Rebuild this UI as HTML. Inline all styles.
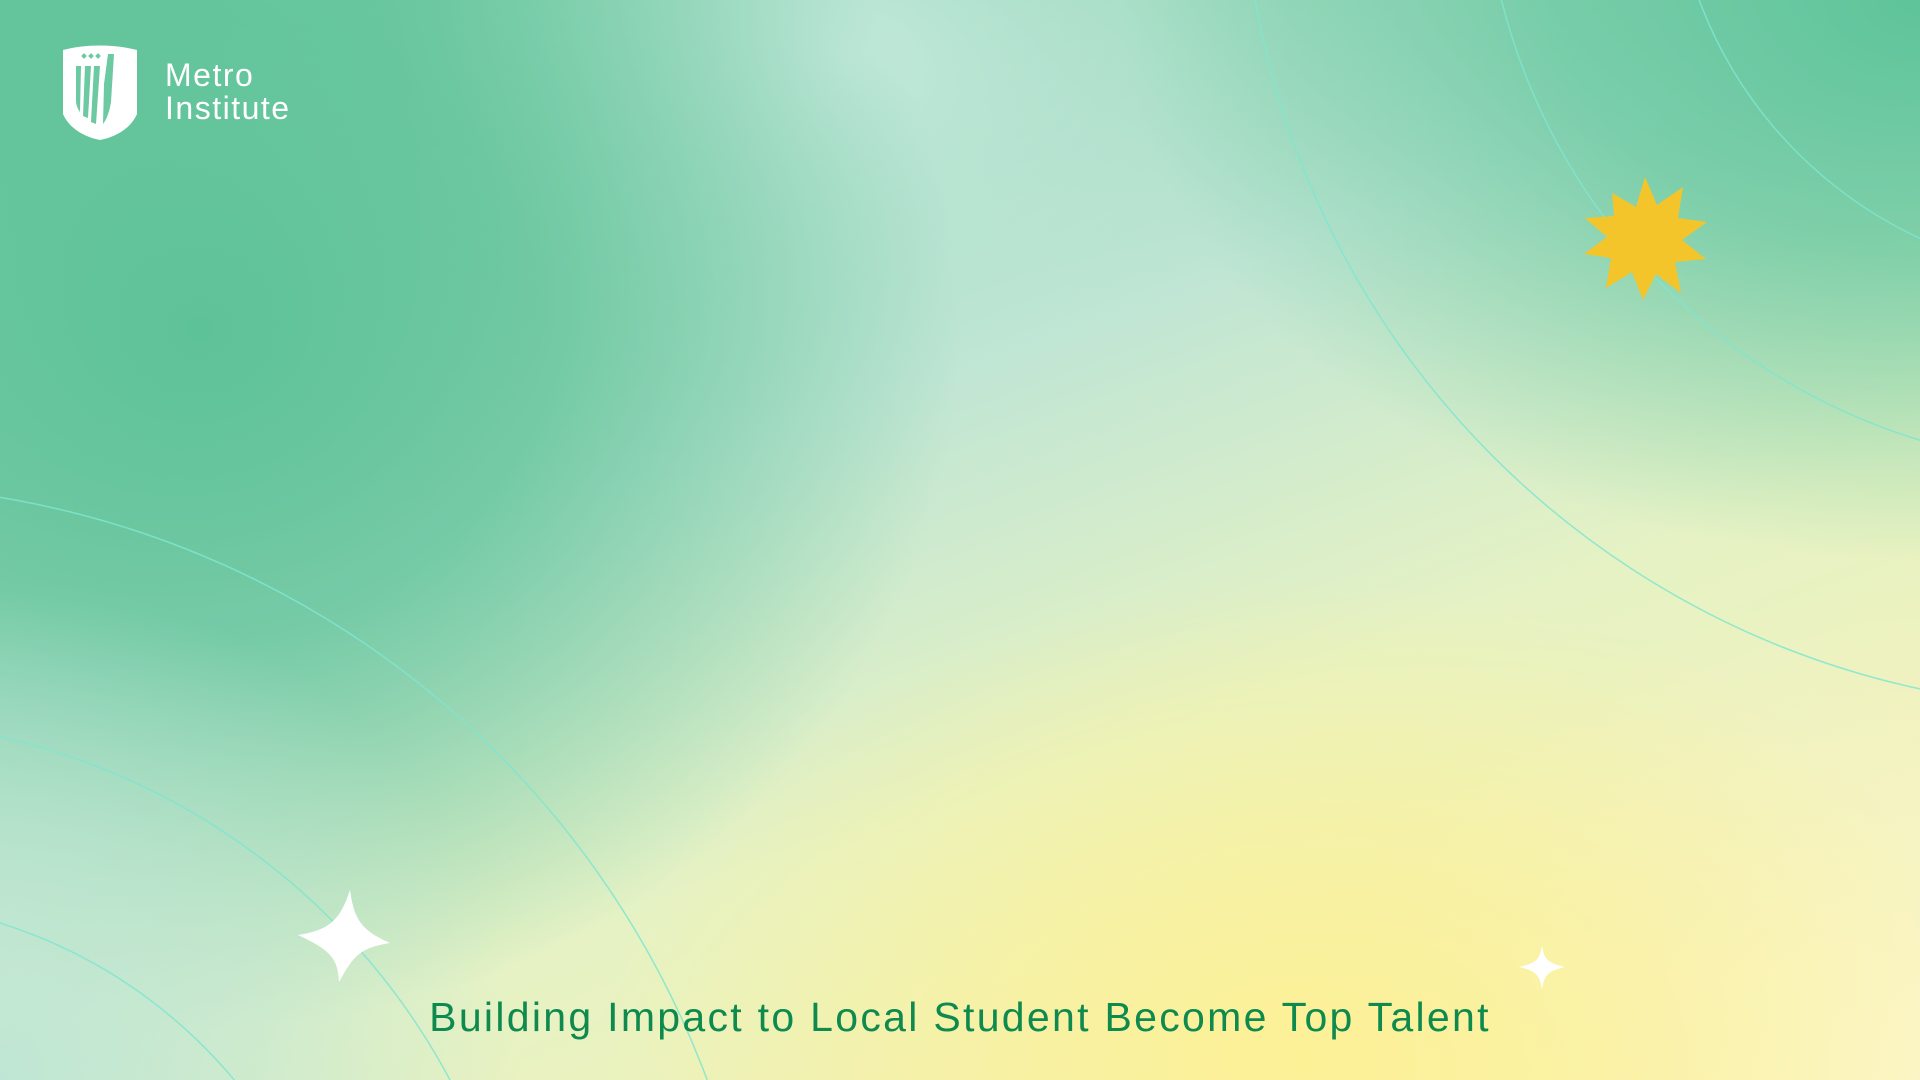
<!DOCTYPE html>
<html><head><meta charset="utf-8"><style>
html,body{margin:0;padding:0;width:1920px;height:1080px;overflow:hidden}
body{position:relative;font-family:"Liberation Sans",sans-serif;
background:
radial-gradient(ellipse 700px 480px at 1300px 1060px,#fdf196 0%,rgba(253,241,150,0.6) 45%,rgba(253,241,150,0) 100%),
radial-gradient(ellipse 600px 500px at 1920px 1080px,#fbf6cc 0%,rgba(251,246,204,0) 100%),
radial-gradient(ellipse 520px 500px at 0px 1080px,#bfe6d4 0%,rgba(191,230,212,0.6) 50%,rgba(191,230,212,0) 100%),
radial-gradient(ellipse 800px 560px at 1920px 0px,#5ec49a 0%,rgba(94,196,154,0.7) 45%,rgba(94,196,154,0) 100%),
radial-gradient(ellipse 760px 700px at 200px 330px,#5ec298 0%,rgba(94,194,152,0.75) 45%,rgba(94,194,152,0) 100%),
radial-gradient(ellipse 450px 350px at 850px 60px,#c2e8da 0%,rgba(194,232,218,0) 100%),
linear-gradient(160deg,#6ccaa0 0%,#bfe5d4 40%,#e6f2c4 65%,#f7f0b0 100%);}
svg{display:block}
.t{position:absolute;left:0;width:1920px;top:994px;height:46px;line-height:46px;text-align:center;font-size:41px;color:#0f8a4f;letter-spacing:2.3px;white-space:nowrap}
</style></head><body>
<svg width="1920" height="1080" style="position:absolute;left:0;top:0">
<g fill="none" stroke="#7fe6cf" stroke-width="1.5" opacity="0.85">
<circle cx="2100" cy="-150" r="858"/>
<circle cx="2100" cy="-150" r="617"/>
<circle cx="2100" cy="-150" r="428"/>
<circle cx="-150" cy="1400" r="915"/>
<circle cx="-150" cy="1400" r="680"/>
<circle cx="-150" cy="1400" r="500"/>
</g>
<polygon fill="#f4c52a" points="1645,177 1657,205 1683,187 1678,218 1707,222 1682,240 1706,259 1675,262 1681,293 1656,274 1643,300 1632,272 1606,288 1611,258 1584,254 1607,237 1585,218 1614,216 1612,193 1636,207"/>
<path fill="#fff" d="M350 890 C354 918 360 930 390 943 C360 948 354 955 339 982 C338 958 330 950 298 935 C330 930 340 920 350 890Z"/>
<path fill="#fff" d="M1542 945 C1544 960 1548 963 1565 967 C1548 971 1544 975 1542 990 C1540 975 1536 971 1519 967 C1536 963 1540 960 1542 945Z"/>
<g transform="translate(61,44)">
<path fill="#fff" d="M2 6 C25 0 52 0 76 6 L76 70 C70 84 55 93 39 96 C23 93 8 84 2 70Z"/>
<g fill="#6cc9a2">
<rect x="21" y="10" width="4" height="4" transform="rotate(45 23 12)"/>
<rect x="28" y="10" width="4" height="4" transform="rotate(45 30 12)"/>
<rect x="35" y="10" width="4" height="4" transform="rotate(45 37 12)"/>
<path d="M15 22 L20 22 L19 68 C16 64 15 60 15 56Z"/>
<path d="M24 22 L30 22 L27 74 L22 72Z"/>
<path d="M33 22 L39 22 L35 80 L30 78Z"/>
<path d="M47 10 L53 10 L50 58 C48 70 45 76 42 80 L43 40Z"/>
</g>
</g>
<text x="165" y="86" font-family="Liberation Sans,sans-serif" font-size="32" letter-spacing="1.5" fill="#fff">Metro</text>
<text x="165" y="119" font-family="Liberation Sans,sans-serif" font-size="32" letter-spacing="1.5" fill="#fff">Institute</text>
</svg>
<div class="t">Building Impact to Local Student Become Top Talent</div>
</body></html>
